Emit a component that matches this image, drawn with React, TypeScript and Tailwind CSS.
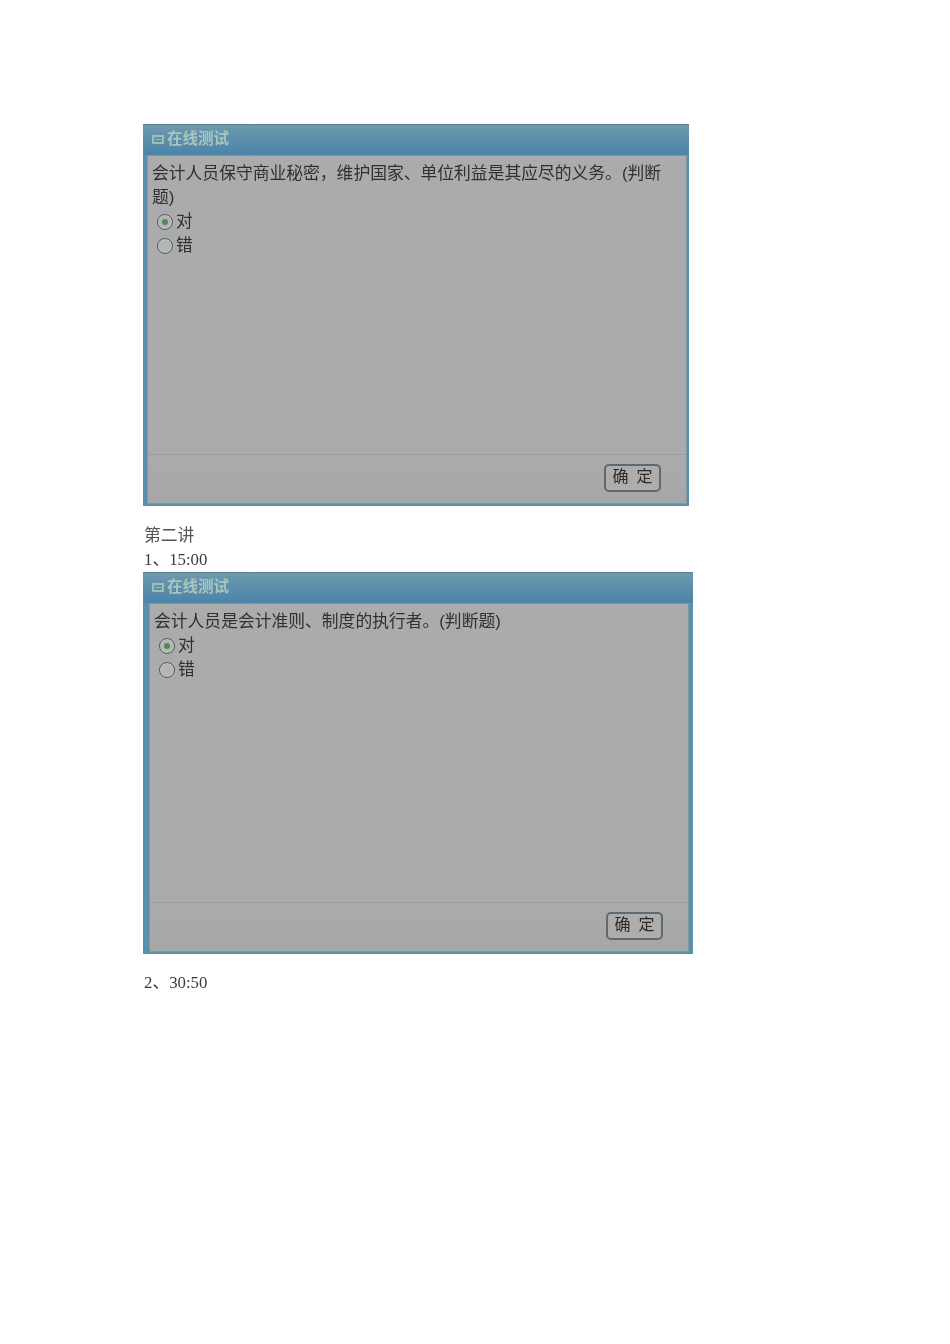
import React from 'react';

const cjk = "font-['Liberation_Sans','Noto_Sans_CJK_SC',sans-serif]";

function Radio({ checked, label }: { checked?: boolean; label: string }) {
  return (
    <div className="flex items-center h-6 pl-[5px]">
      <span className="flex items-center justify-center w-4 h-4 rounded-full border border-[#4f5c64] bg-[#b4b6b4] shadow-[inset_0_0_2px_#ffffff80]">
        {checked && <span className="block w-1.5 h-1.5 rounded-full bg-[#4d8a58]" />}
      </span>
      <span className="ml-[3px] text-[#303030]">{label}</span>
    </div>
  );
}

function TestPanel({ width, question, inset }: { width: string; question: string; inset: string }) {
  return (
    <div className={`${width} h-[382px] flex flex-col bg-[#5a8fae] border-t border-[#5f7f8f] ${cjk} blur-[0.4px]`}>
      <div className="h-[30px] shrink-0 flex items-center pl-[9px] pb-[2px] bg-gradient-to-b from-[#6d9aad] to-[#4c83a9]">
        <span className="flex items-center justify-center w-[12px] h-[9px] border-2 border-[#9fc0ae] mr-[3px]">
          <span className="block w-[6px] h-px bg-[#9fc0ae]" />
        </span>
        <span className="text-[15.5px] font-bold text-[#a9c5bd]">在线测试</span>
      </div>
      <div className={`flex-1 min-h-0 flex flex-col ${inset} mb-[2px] border border-[#8397a3] bg-[#ababab]`}>
        <div className="flex-1 pl-[4px] pr-[20px] pt-[6px] text-[16.8px] leading-6 text-[#303030]">
          <p>{question}</p>
          <Radio checked label="对" />
          <Radio label="错" />
        </div>
        <div className="h-[49px] shrink-0 flex justify-end items-start pt-[9px] pr-[25px] border-t border-[#9d9d9d] bg-gradient-to-b from-[#ababab] to-[#a7a7a7]">
          <div className="w-[57px] h-[28px] flex items-center justify-center gap-[8px] rounded-[5px] border-2 border-[#5b6a73] bg-[#adadad] text-[16px] leading-none text-[#2a2a2a] pb-[3px]">
            <span>确</span>
            <span>定</span>
          </div>
        </div>
      </div>
    </div>
  );
}

export default function App() {
  return (
    <div className="w-[950px] h-[1344px] bg-white pt-[124px] pl-[143px] text-[16.8px] leading-6 text-[#3a3a3a] font-['Liberation_Serif','Noto_Sans_CJK_SC',serif]">
      <TestPanel
        width="w-[546px]"
        inset="ml-[4px] mr-[2px]"
        question="会计人员保守商业秘密，维护国家、单位利益是其应尽的义务。(判断题)"
      />
      <p className="mt-[18px] pl-px blur-[0.3px] text-[#555555]">第二讲</p>
      <p className="pl-px blur-[0.3px]">1、15:00</p>
      <TestPanel
        width="w-[550px]"
        inset="ml-[6px] mr-[4px]"
        question="会计人员是会计准则、制度的执行者。(判断题)"
      />
      <p className="mt-[17px] pl-px blur-[0.3px]">2、30:50</p>
    </div>
  );
}
